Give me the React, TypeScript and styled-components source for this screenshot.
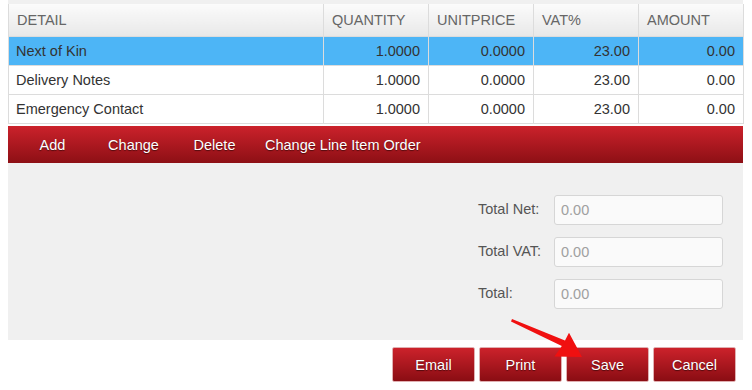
import React from "react";
import styled, { createGlobalStyle } from "styled-components";

const GlobalStyle = createGlobalStyle`
  body {
    margin: 0;
    background: #ffffff;
    font-family: "Liberation Sans", Arial, sans-serif;
  }
`;

type Line = {
  detail: string;
  quantity: string;
  unitPrice: string;
  vat: string;
  amount: string;
};

const lines: Line[] = [
  { detail: "Next of Kin", quantity: "1.0000", unitPrice: "0.0000", vat: "23.00", amount: "0.00" },
  { detail: "Delivery Notes", quantity: "1.0000", unitPrice: "0.0000", vat: "23.00", amount: "0.00" },
  { detail: "Emergency Contact", quantity: "1.0000", unitPrice: "0.0000", vat: "23.00", amount: "0.00" },
];

const totals = ["Total Net:", "Total VAT:", "Total:"];

const App = () => {
  return (
    <>
      <GlobalStyle />
      <Page>
        <TopStrip />
        <Table>
          <colgroup>
            <col style={{ width: 315 }} />
            <col style={{ width: 105 }} />
            <col style={{ width: 105 }} />
            <col style={{ width: 105 }} />
            <col style={{ width: 105 }} />
          </colgroup>
          <thead>
            <tr>
              <Th>DETAIL</Th>
              <Th>QUANTITY</Th>
              <Th>UNITPRICE</Th>
              <Th>VAT%</Th>
              <Th>AMOUNT</Th>
            </tr>
          </thead>
          <tbody>
            {lines.map((l, i) => (
              <Tr key={l.detail} $selected={i === 0}>
                <Td>{l.detail}</Td>
                <Td $num>{l.quantity}</Td>
                <Td $num>{l.unitPrice}</Td>
                <Td $num>{l.vat}</Td>
                <Td $num>{l.amount}</Td>
              </Tr>
            ))}
          </tbody>
        </Table>

        <Toolbar>
          <ToolLink>Add</ToolLink>
          <ToolLink>Change</ToolLink>
          <ToolLink>Delete</ToolLink>
          <ToolLink>Change Line Item Order</ToolLink>
        </Toolbar>

        <TotalsPanel>
          <TotalsGrid>
            {totals.map((t) => (
              <React.Fragment key={t}>
                <TotalLabel>{t}</TotalLabel>
                <TotalInput readOnly value="" placeholder="0.00" />
              </React.Fragment>
            ))}
          </TotalsGrid>
        </TotalsPanel>

        <Actions>
          <ActionButton>Email</ActionButton>
          <ActionButton>Print</ActionButton>
          <ActionButton>Save</ActionButton>
          <ActionButton>Cancel</ActionButton>
        </Actions>

        <Arrow width="90" height="50" viewBox="0 0 90 50">
          <polygon
            points="2,3.6 3,1 56,22.5 60,14.8 73,39 45.5,38.6 52.8,28 "
            fill="#f01010"
          />
        </Arrow>
      </Page>
    </>
  );
};

export default App;

const Page = styled.div`
  position: relative;
  width: 752px;
  height: 390px;
  padding-left: 8px;
  box-sizing: border-box;
`;

const TopStrip = styled.div`
  width: 735px;
  height: 4px;
  background: #f0f0f0;
`;

const Table = styled.table`
  width: 735px;
  border-collapse: collapse;
  table-layout: fixed;
  font-size: 14.5px;
`;

const Th = styled.th`
  height: 32px;
  padding: 0 8px;
  text-align: left;
  font-weight: normal;
  color: #666666;
  background: linear-gradient(#fbfbfb, #e8e8e8);
  border: 1px solid #dcdcdc;
  border-top: none;
`;

const Tr = styled.tr<{ $selected?: boolean }>`
  background: ${(p) => (p.$selected ? "#4db5f6" : "#ffffff")};
`;

const Td = styled.td<{ $num?: boolean }>`
  height: 28px;
  padding: 0 8px 0 7px;
  color: #333333;
  line-height: 16px;
  text-align: ${(p) => (p.$num ? "right" : "left")};
  border: 1px solid #dcdcdc;
`;

const Toolbar = styled.div`
  width: 735px;
  height: 37px;
  margin-top: 2px;
  padding-left: 4px;
  box-sizing: border-box;
  display: flex;
  align-items: center;
  background: linear-gradient(#cb222b, #8d0f15);
`;

const ToolLink = styled.div`
  min-width: 81px;
  padding: 0 10px;
  box-sizing: border-box;
  text-align: center;
  color: #ffffff;
  font-size: 14.5px;
  text-shadow: 0 1px 1px rgba(0, 0, 0, 0.5);
  cursor: pointer;
`;

const TotalsPanel = styled.div`
  width: 735px;
  height: 177px;
  background: #f0f0f0;
  padding: 32px 0 0 470px;
  box-sizing: border-box;
`;

const TotalsGrid = styled.div`
  display: grid;
  grid-template-columns: 76px 169px;
  row-gap: 12px;
  align-items: center;
`;

const TotalLabel = styled.div`
  font-size: 14.5px;
  color: #555555;
  margin-top: -3px;
`;

const TotalInput = styled.input`
  width: 169px;
  height: 30px;
  box-sizing: border-box;
  border: 1px solid #d6d6d6;
  border-radius: 3px;
  background: #fafafa;
  padding: 0 6px;
  font-family: "Liberation Sans", Arial, sans-serif;
  font-size: 14.5px;
  &::placeholder {
    color: #a0a0a0;
  }
`;

const Actions = styled.div`
  width: 728px;
  margin-top: 7px;
  display: flex;
  justify-content: flex-end;
  gap: 4px;
`;

const ActionButton = styled.button`
  width: 83px;
  height: 35px;
  border: 1px solid #e0b0b2;
  border-radius: 2px;
  background: linear-gradient(#cc222b, #8a0d13);
  color: #ffffff;
  font-family: "Liberation Sans", Arial, sans-serif;
  font-size: 14.5px;
  text-shadow: 0 1px 1px rgba(0, 0, 0, 0.5);
  cursor: pointer;
`;

const Arrow = styled.svg`
  position: absolute;
  left: 509px;
  top: 318px;
`;
